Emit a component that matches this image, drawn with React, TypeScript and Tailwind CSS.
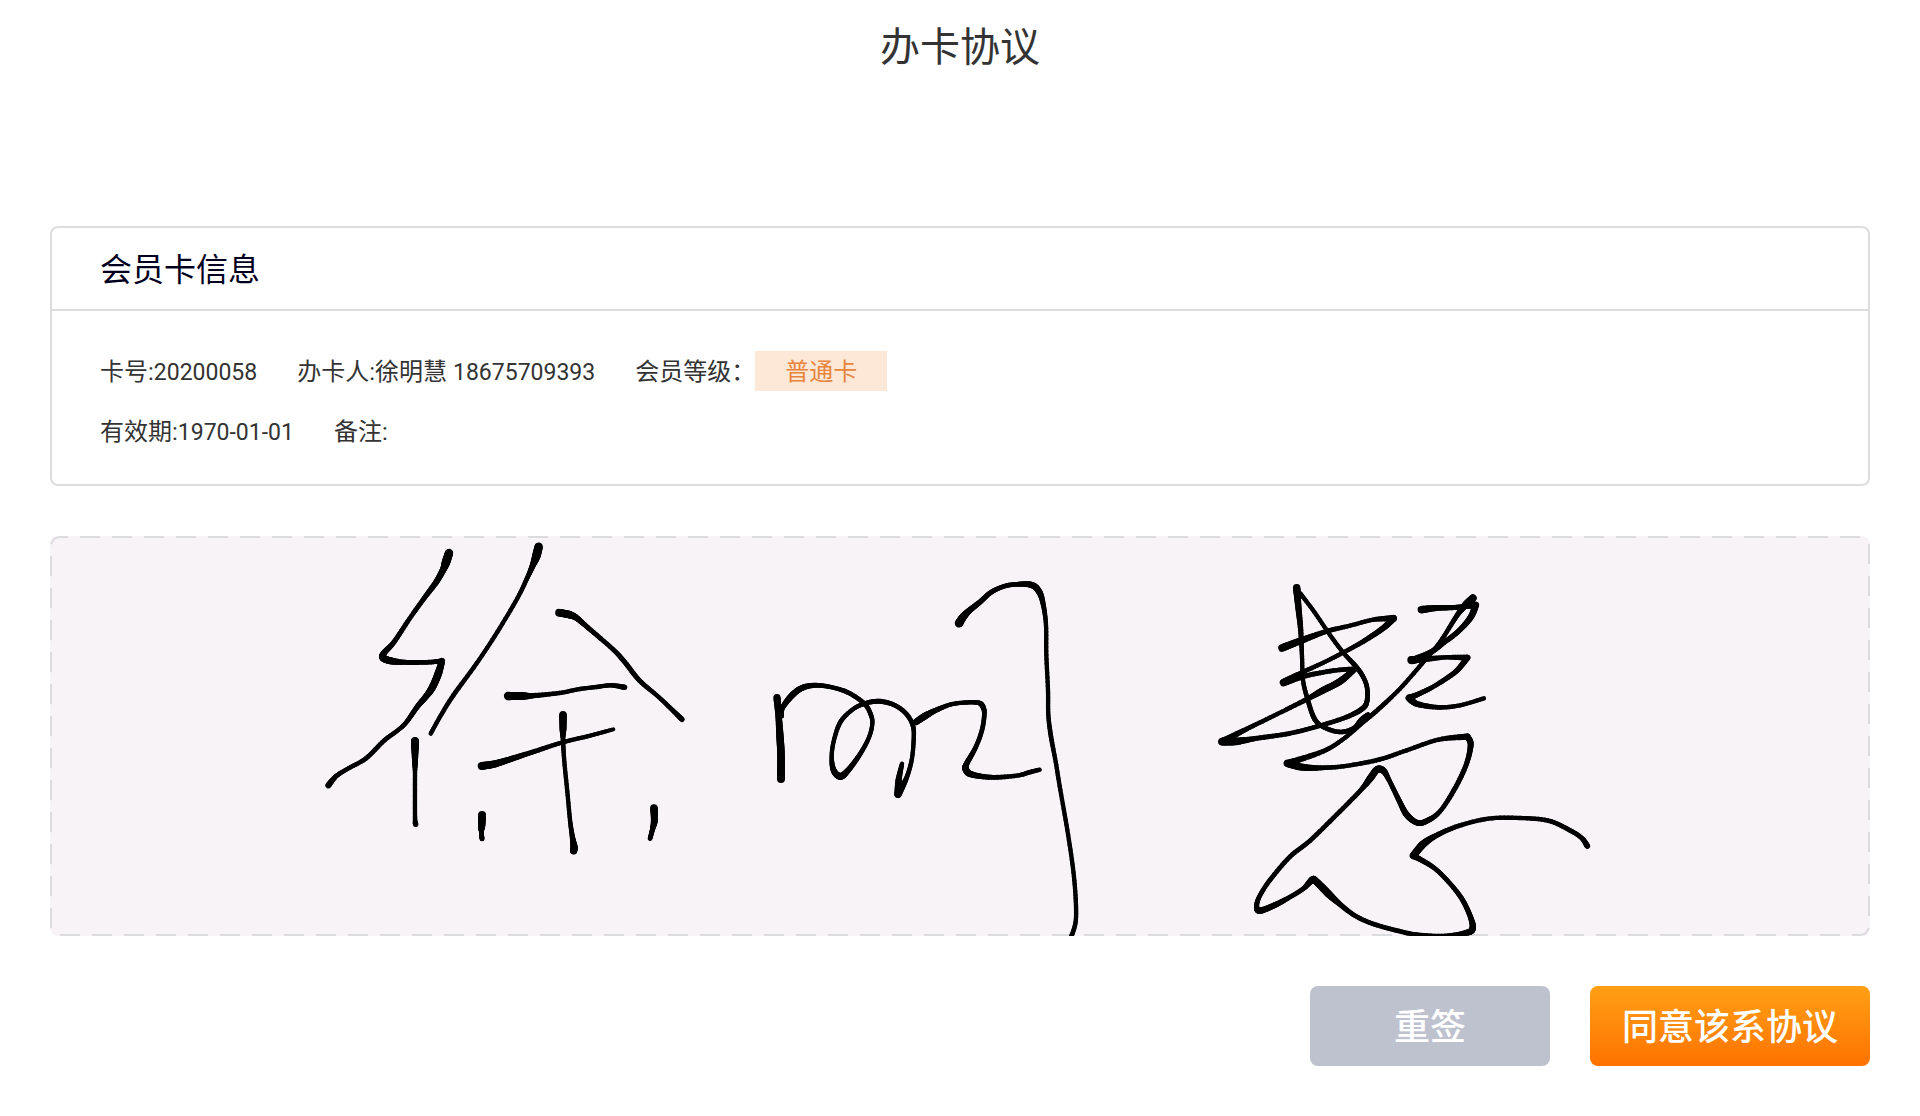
type Point = [x: number, y: number, width: number];

interface Glyph {
  name: string;
  origin: [number, number];
  strokes: Point[][];
}

// pen samples, three units to a pixel, relative to each glyph's origin
const signature: Glyph[] = [
  {
    name: '徐',
    origin: [260, -6],
    strokes: [
      [[417, 69, 24], [408, 97, 25], [400, 118, 19], [378, 157, 17], [343, 204, 14], [298, 267, 13], [252, 336, 14], [222, 369, 17], [220, 384, 21], [245, 393, 20], [285, 397, 14], [350, 397, 13], [396, 393, 14], [396, 393, 17], [384, 433, 22], [366, 474, 21], [345, 503, 17], [322, 530, 15], [288, 578, 13], [262, 602, 12], [222, 632, 13], [168, 685, 13], [110, 718, 12], [78, 739, 13], [55, 766, 17]],
      [[686, 50, 24], [679, 78, 25], [668, 107, 17], [652, 143, 13], [622, 205, 12], [562, 306, 12], [500, 400, 12], [430, 496, 13], [392, 557, 12], [362, 611, 12]],
      [[747, 248, 22], [778, 254, 22], [800, 264, 17], [835, 294, 14], [908, 357, 13], [944, 396, 14], [988, 451, 14], [1046, 501, 12], [1088, 541, 13], [1116, 568, 15]],
      [[594, 498, 24], [635, 498, 23], [670, 497, 15], [748, 489, 12], [810, 477, 12], [860, 471, 12], [903, 466, 12], [944, 472, 15]],
      [[759, 554, 22], [759, 596, 20], [759, 628, 13], [763, 695, 12], [772, 785, 12], [780, 870, 12], [787, 920, 14], [792, 950, 20], [791, 963, 20]],
      [[515, 708, 23], [553, 702, 21], [600, 688, 17], [665, 667, 14], [758, 637, 12], [832, 619, 12], [910, 598, 11]],
      [[315, 633, 23], [315, 655, 21], [315, 692, 17], [315, 735, 12], [315, 860, 12], [317, 883, 15]],
      [[516, 855, 23], [515, 887, 21], [514, 905, 13], [516, 926, 14]],
      [[1032, 834, 22], [1033, 872, 20], [1027, 900, 14], [1020, 926, 13]],
    ],
  },
  {
    name: '明',
    origin: [700, 24],
    strokes: [
      [[81, 413, 21], [86, 470, 18], [90, 530, 21], [93, 585, 22], [93, 657, 23]],
      [[96, 470, 10], [97, 445, 14], [125, 407, 18], [158, 383, 17], [200, 376, 14], [250, 383, 12], [297, 399, 13], [342, 430, 13], [361, 460, 13], [367, 490, 12], [357, 532, 12], [331, 581, 13], [295, 630, 16], [271, 649, 20], [251, 631, 17], [245, 590, 12], [252, 540, 12], [272, 485, 13], [310, 447, 12], [350, 429, 13], [390, 424, 14], [435, 436, 13], [470, 463, 13], [489, 498, 13], [491, 540, 12], [485, 600, 12], [469, 655, 13], [444, 703, 21], [444, 703, 21], [446, 660, 18], [456, 611, 12]],
      [[498, 486, 18], [525, 468, 20], [555, 452, 15], [600, 434, 12], [640, 428, 12], [684, 428, 13], [698, 439, 15], [703, 462, 13], [696, 510, 13], [677, 562, 13], [649, 613, 16], [648, 629, 19], [664, 643, 18], [725, 652, 14], [800, 647, 12], [838, 637, 13], [869, 629, 12]],
      [[627, 190, 25], [640, 170, 22], [660, 150, 17], [690, 126, 15], [723, 97, 14], [762, 79, 13], [800, 73, 13], [845, 75, 18], [868, 96, 18], [880, 135, 14], [888, 195, 12], [889, 285, 12], [894, 390, 12], [895, 465, 12], [903, 530, 13], [917, 605, 12], [931, 690, 12], [952, 810, 12], [969, 925, 12], [977, 1015, 12], [977, 1085, 12], [963, 1132, 13]],
    ],
  },
  {
    name: '慧',
    origin: [1150, 34],
    strokes: [
      [[246, 234, 22], [300, 213, 20], [380, 184, 14], [450, 167, 12], [520, 149, 12], [581, 145, 19], [581, 145, 19], [550, 174, 17], [492, 213, 14], [429, 248, 12], [370, 278, 12], [300, 310, 13], [250, 336, 18]],
      [[250, 338, 22], [320, 317, 14], [400, 302, 13], [466, 296, 13], [466, 296, 15], [420, 334, 20], [365, 363, 19], [320, 388, 14], [220, 438, 12], [140, 477, 13], [66, 515, 20], [66, 515, 22], [110, 514, 22], [170, 505, 14], [270, 490, 13], [360, 467, 13], [440, 441, 13], [487, 416, 15], [501, 393, 14], [501, 352, 13], [488, 318, 13], [464, 285, 14], [429, 247, 12], [390, 195, 12], [343, 126, 12], [300, 69, 12]],
      [[290, 53, 22], [295, 110, 18], [302, 180, 15], [306, 260, 12], [309, 330, 12], [322, 385, 13], [345, 449, 14], [379, 475, 13], [423, 486, 13], [462, 474, 13], [483, 450, 14], [504, 434, 14]],
      [[664, 119, 22], [710, 114, 17], [770, 112, 14], [827, 105, 17], [827, 105, 20], [812, 142, 18], [775, 184, 15], [729, 220, 14], [690, 248, 16], [635, 272, 20]],
      [[634, 270, 24], [680, 267, 16], [740, 262, 12], [802, 263, 17], [802, 263, 18], [767, 305, 15], [705, 347, 13], [658, 371, 14], [627, 384, 18], [627, 384, 20], [652, 402, 17], [715, 412, 13], [780, 406, 12], [852, 385, 12]],
      [[819, 84, 22], [795, 106, 20], [770, 138, 14], [720, 216, 12], [665, 282, 12], [600, 356, 12], [535, 418, 13], [485, 460, 13], [430, 507, 12], [369, 544, 13], [262, 580, 19], [262, 580, 22], [310, 592, 20], [380, 593, 13], [450, 586, 12], [540, 568, 13], [620, 541, 12], [715, 509, 12], [802, 500, 18], [802, 500, 18], [812, 524, 17], [799, 583, 14], [765, 655, 14], [720, 724, 13], [680, 753, 16], [651, 758, 16], [620, 734, 18], [598, 693, 15], [567, 630, 13], [550, 602, 18], [531, 599, 20], [510, 626, 20], [480, 663, 13], [410, 734, 13], [330, 812, 13], [270, 860, 13], [210, 930, 13], [178, 980, 13], [170, 1010, 14], [180, 1022, 18], [225, 1005, 17], [270, 981, 13], [310, 956, 13], [336, 930, 19], [348, 934, 20], [385, 971, 22], [420, 1003, 15], [465, 1037, 13], [515, 1060, 13], [580, 1079, 13], [650, 1094, 13], [735, 1098, 13], [798, 1089, 17], [818, 1075, 19], [810, 1037, 15], [784, 984, 14], [744, 934, 13], [700, 892, 13], [640, 857, 17], [640, 857, 21], [670, 822, 22], [710, 796, 15], [775, 768, 13], [865, 746, 12], [960, 744, 12], [1045, 752, 13], [1110, 781, 13], [1145, 804, 13], [1162, 828, 16]],
    ],
  },
];

const STEPS = 8;

function spline(a: number, b: number, c: number, d: number, t: number) {
  return 0.5 * (2 * b + (c - a) * t + (2 * a - 5 * b + 4 * c - d) * t * t + (3 * b - a - 3 * c + d) * t * t * t);
}

function smooth(points: Point[]): Point[] {
  const result: Point[] = [points[0]];
  for (let i = 0; i < points.length - 1; i++) {
    const p0 = points[Math.max(i - 1, 0)];
    const p1 = points[i];
    const p2 = points[i + 1];
    const p3 = points[Math.min(i + 2, points.length - 1)];
    // a repeated sample marks a sharp corner
    if (p1[0] === p2[0] && p1[1] === p2[1]) continue;
    for (let s = 1; s <= STEPS; s++) {
      const t = s / STEPS;
      result.push([
        spline(p0[0], p1[0], p2[0], p3[0], t),
        spline(p0[1], p1[1], p2[1], p3[1], t),
        p1[2] + (p2[2] - p1[2]) * t,
      ]);
    }
  }
  return result;
}

function PenStroke({ points }: { points: Point[] }) {
  const samples = smooth(points);
  return (
    <g>
      {samples.slice(1).map(([x, y, width], i) => (
        <line key={i} x1={samples[i][0]} y1={samples[i][1]} x2={x} y2={y} strokeWidth={width + 1} />
      ))}
    </g>
  );
}

function SignaturePad() {
  return (
    <section aria-label="签名" className="relative h-100 overflow-hidden rounded-lg bg-[#f7f3f7]">
      <svg className="absolute inset-0 h-full w-full" aria-hidden="true">
        <rect
          x="1"
          y="1"
          rx="9"
          className="h-[calc(100%-2px)] w-[calc(100%-2px)] fill-none stroke-[#dcdbde]"
          strokeWidth="2"
          strokeDasharray="20 12"
          strokeDashoffset="12"
        />
      </svg>
      <svg viewBox="0 0 1820 400" className="relative h-full w-full" role="img" aria-label="徐明慧" stroke="#000" strokeLinecap="round">
        {signature.map((glyph) => (
          <g key={glyph.name} transform={`translate(${glyph.origin[0]} ${glyph.origin[1]}) scale(${1 / 3})`}>
            {glyph.strokes.map((points, i) => (
              <PenStroke key={i} points={points} />
            ))}
          </g>
        ))}
      </svg>
    </section>
  );
}

function Field({ label, text, number }: { label: string; text?: string; number?: string }) {
  return (
    <p className="pt-0.5">
      {label}
      {text}
      <span className="text-[23px]">{number}</span>
    </p>
  );
}

function CardInfo() {
  return (
    <section className="rounded-lg border-2 border-[#dddddd]">
      <h2 className="border-b-2 border-[#dddddd] px-12 pt-[18px] pb-[15px] text-[32px] leading-12 text-[#00001e]">会员卡信息</h2>
      <div className="space-y-5 px-12 pt-10 pb-[33px] text-2xl text-[#333333]">
        <div className="flex h-10 items-center gap-10">
          <Field label="卡号:" number="20200058" />
          <Field label="办卡人:" text="徐明慧 " number="18675709393" />
          <div className="flex items-center">
            <p className="pt-0.5">会员等级：</p>
            <span className="bg-[#fde7d7] px-[30px] pt-0.5 leading-[38px] text-[#e8853d]">普通卡</span>
          </div>
        </div>
        <div className="flex h-10 items-center gap-10">
          <Field label="有效期:" number="1970-01-01" />
          <Field label="备注:" />
        </div>
      </div>
    </section>
  );
}

export default function App() {
  return (
    <main className="min-h-screen bg-white px-[50px] pb-[50px] font-[Roboto,'Noto_Sans_CJK_SC',sans-serif]">
      <h1 className="mb-[148px] pt-[18px] text-center text-[40px] leading-[60px] text-[#333333]">办卡协议</h1>
      <div className="space-y-[50px]">
        <CardInfo />
        <SignaturePad />
        <div className="flex justify-end gap-10 text-4xl font-medium text-white">
          <button type="button" className="h-20 w-60 rounded-lg bg-[#bec2cf] pt-1">重签</button>
          <button type="button" className="h-20 w-70 rounded-lg bg-linear-to-b from-[#ff9f15] to-[#ff7200] pt-1">同意该系协议</button>
        </div>
      </div>
    </main>
  );
}
